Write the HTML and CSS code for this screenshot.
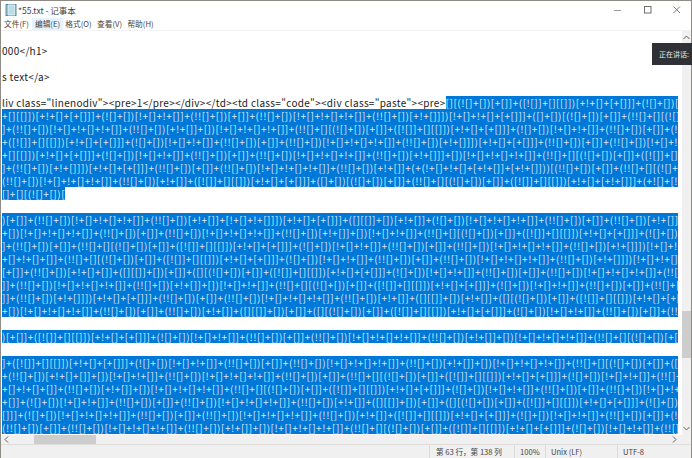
FILE: index.html
```html
<!DOCTYPE html>
<html lang="zh-CN">
<head>
<meta charset="utf-8">
<title>*55.txt - 记事本</title>
<link rel="stylesheet" href="styles.css">
</head>
<body>
<div class="window">
  <header class="titlebar">
    <svg class="app-icon" width="12" height="12" viewBox="0 0 12 12"><rect x="1" y="0.5" width="10" height="11" fill="#8fc7dc" stroke="#5f8d9e"/><rect x="3" y="0.5" width="7" height="11" fill="#cfe9f2"/><path d="M4 3h5M4 5h5M4 7h5M4 9h5" stroke="#9cc4d2" stroke-width="0.7"/></svg>
    <span class="title">*55.txt - 记事本</span>
    <div class="controls">
      <svg width="10" height="10" viewBox="0 0 10 10"><path d="M0 5.5h7" stroke="#9a9a9a" stroke-width="1"/></svg>
      <svg width="10" height="10" viewBox="0 0 10 10"><rect x="1.5" y="1.5" width="6.500" height="6.500" fill="none" stroke="#6f6f6f"/></svg>
      <svg width="10" height="10" viewBox="0 0 10 10"><path d="M1.500 1.500l6.500 6.500M8 1.500l-6.500 6.500" stroke="#6f6f6f" stroke-width="0.900"/></svg>
    </div>
  </header>
  <nav class="menu">
    <span class="item">文件(F)</span>
    <span class="item hover">编辑(E)</span>
    <span class="item">格式(O)</span>
    <span class="item">查看(V)</span>
    <span class="item">帮助(H)</span>
  </nav>
  <div class="body">
    <main class="editor">
      <div class="line"></div>
      <div class="line">000&lt;/h1&gt;</div>
      <div class="line"></div>
      <div class="line">s text&lt;/a&gt;</div>
      <div class="line"></div>
      <div class="line">liv class="linenodiv"&gt;&lt;pre&gt;1&lt;/pre&gt;&lt;/div&gt;&lt;/td&gt;&lt;td class="code"&gt;&lt;div class="paste"&gt;&lt;pre&gt;<span class="sel-end">[][(![]+[])[+[]]+([![]]+[][[]])[+!+[]+[+[]]]+(![]+[])[!+[]+!+[]]+(!![]+[])[+[]]+(!![]+[])[!+[]</span></div>
      <div class="line sel">+[][[]])[+!+[]+[+[]]]+(![]+[])[!+[]+!+[]]+(!![]+[])[+[]]+(!![]+[])[!+[]+!+[]+!+[]]+(!![]+[])[+!+[]]])[!+[]+!+[]+[+[]]]+([]+[])[(![]+[])[+[]]+(!![]+[][(![]+[])[+[]]+([![]]</div>
      <div class="line sel">]+(!![]+[])[!+[]+!+[]+!+[]]+(!![]+[])[+!+[]]+[])[!+[]+!+[]+!+[]]+(!![]+[][(![]+[])[+[]]+([![]]+[][[]])[+!+[]+[+[]]]+(![]+[])[!+[]+!+[]]+(!![]+[])[+[]]+(!![]+[])[!+[]+!+[]]</div>
      <div class="line sel">+([![]]+[][[]])[+!+[]+[+[]]]+(![]+[])[!+[]+!+[]]+(!![]+[])[+[]]+(!![]+[])[!+[]+!+[]+!+[]]+(!![]+[])[+!+[]]])[+!+[]+[+[]]]+(!![]+[])[+[]]+(!![]+[])[!+[]+!+[]+!+[]]+(!![]+[])</div>
      <div class="line sel">+[][[]])[+!+[]+[+[]]]+(![]+[])[!+[]+!+[]]+(!![]+[])[+[]]+(!![]+[])[!+[]+!+[]+!+[]]+(!![]+[])[+!+[]]]+[])[!+[]+!+[]+!+[]]+(!![]+[][(![]+[])[+[]]+([![]]+[][[]])[+!+[]+[+[]]]</div>
      <div class="line sel">]+(!![]+[])[+!+[]]])[+!+[]+[+[]]]+(!![]+[])[+[]]+(!![]+[])[!+[]+!+[]+!+[]]+(!![]+[])[+!+[]]+(+(!+[]+!+[]+[+!+[]]+[+!+[]]))[(!![]+[])[+[]]+(!![]+[][(![]+[])[+[]]+([![]]+[][[</div>
      <div class="line sel">(!![]+[])[!+[]+!+[]+!+[]]+(!![]+[])[+!+[]]+([![]]+[][[]])[+!+[]+[+[]]]+([]+[])[(![]+[])[+[]]+(!![]+[][(![]+[])[+[]]+([![]]+[][[]])[+!+[]+[+!+[]]]+(+![]+[![]]+([]+[])[([][(![]+[])</div>
      <div class="line"><span class="sel-end">[]+[][(![]+[])[</span></div>
      <div class="line"></div>
      <div class="line sel">)[+[]]+(!![]+[])[!+[]+!+[]+!+[]]+(!![]+[])[+!+[]]+[!+[]+!+[]]])[+!+[]+[+[]]]+([][[]]+[])[+!+[]]+(![]+[])[!+[]+!+[]+!+[]]+(!![]+[])[+[]]+(!![]+[])[+!+[]]+([][[]]+[])[+[]]</div>
      <div class="line sel">+[])[!+[]+!+[]+!+[]]+(!![]+[])[+[]]+(!![]+[])[!+[]+!+[]+!+[]]+(!![]+[])[+!+[]]+[])[!+[]+!+[]]+(!![]+[][(![]+[])[+[]]+([![]]+[][[]])[+!+[]+[+[]]]+(![]+[])[!+[]+!+[]]+(!![]+[])[+[]]</div>
      <div class="line sel">]+(!![]+[])[+[]]+(!![]+[][(![]+[])[+[]]+([![]]+[][[]])[+!+[]+[+[]]]+(![]+[])[!+[]+!+[]]+(!![]+[])[+[]]+(!![]+[])[!+[]+!+[]+!+[]]+(!![]+[])[+!+[]]])[!+[]+!+[]+[+[]]]+([][[]]+[])</div>
      <div class="line sel">+[]+!+[]+[]]+(!![]+[][(![]+[])[+[]]+([![]]+[][[]])[+!+[]+[+[]]]+(![]+[])[!+[]+!+[]]+(!![]+[])[+[]]+(!![]+[])[!+[]+!+[]+!+[]]+(!![]+[])[+!+[]]])[!+[]+!+[]+[+[]]]+([][[]]+[])[+!+[]]</div>
      <div class="line sel">[+[]]+(!![]+[])[+!+[]+[]]+([][[]]+[])[+[]]+([][(![]+[])[+[]]+([![]]+[][[]])[+!+[]+[+[]]]+(![]+[])[!+[]+!+[]]+(!![]+[])[+[]]+(!![]+[])[!+[]+!+[]+!+[]]+(!![]+[])[+!+[]]]+[])[+!+[]]</div>
      <div class="line sel">]]+(!![]+[])[!+[]+!+[]+!+[]]+(!![]+[])[+!+[]]+[])[!+[]+!+[]]+(!![]+[][(![]+[])[+[]]+([![]]+[][[]])[+!+[]+[+[]]]+(![]+[])[!+[]+!+[]]+(!![]+[])[+[]]+(!![]+[])[!+[]+!+[]+!+[]]+(!![]+[])</div>
      <div class="line sel">]]+(!![]+[])[+!+[]]])[+!+[]+[+[]]]+(!![]+[])[+[]]+(!![]+[])[!+[]+!+[]+!+[]]+(!![]+[])[+!+[]]+([][[]]+[])[+!+[]]+([][(![]+[])[+[]]+([![]]+[][[]])[+!+[]+[+[]]]+(![]+[])[!+[]+!+[]]</div>
      <div class="line sel">+[])[!+[]+!+[]+!+[]]+(!![]+[])[+[]]+(!![]+[])[+!+[]]+([][[]]+[])[+[]]+([][(![]+[])[+[]]+([![]]+[][[]])[+!+[]+[+[]]]+(![]+[])[!+[]+!+[]]+(!![]+[])[+[]]+(!![]+[])[!+[]+!+[]+!+[]]</div>
      <div class="line"></div>
      <div class="line sel">)[+[]]+([![]]+[][[]])[+!+[]+[+[]]]+(![]+[])[!+[]+!+[]]+(!![]+[])[+[]]+(!![]+[])[!+[]+!+[]+!+[]]+(!![]+[])[+!+[]]+[])[!+[]+!+[]+!+[]]+(!![]+[][(![]+[])[+[]]+([![]]+[][[]])[+!+[]</div>
      <div class="line"></div>
      <div class="line sel">]+([![]]+[][[]])[+!+[]+[+[]]]+(![]+[])[!+[]+!+[]]+(!![]+[])[+[]]+(!![]+[])[!+[]+!+[]+!+[]]+(!![]+[])[+!+[]]+[])[!+[]+!+[]+!+[]]+(!![]+[][(![]+[])[+[]]+([![]]+[][[]])[+!+[]+[+[]]]</div>
      <div class="line sel">+(!![]+[])[+!+[]+[]]+[])[!+[]+!+[]]+(!![]+[])[!+[]+!+[]+!+[]]+(!![]+[])[+[]]+(!![]+[][(![]+[])[+[]]+([![]]+[][[]])[+!+[]+[+[]]]+(![]+[])[!+[]+!+[]]+(!![]+[])[+[]]+(!![]+[])[!+[]+!+[]</div>
      <div class="line sel">+[]+!+[]+[]]+(!![]+[])[+!+[]]+[])[!+[]+!+[]+!+[]]+(!![]+[][(![]+[])[+[]]+([![]]+[][[]])[+!+[]+[+[]]]+(![]+[])[!+[]+!+[]]+(!![]+[])[+[]]+(!![]+[])[!+[]+!+[]+!+[]]+(!![]+[])[+!+[]]</div>
      <div class="line sel">+[]]+(![]+[])[!+[]+!+[]]+(!![]+[])[+[]]+(!![]+[])[!+[]+!+[]+!+[]]+(!![]+[])[+!+[]]+([][[]]+[])[+[]]+([][(![]+[])[+[]]+([![]]+[][[]])[+!+[]+[+[]]]+(![]+[])[!+[]+!+[]]+(!![]+[])[+[]]</div>
      <div class="line sel">[]]]+(![]+[])[!+[]+!+[]+!+[]]+(!![]+[])[+[]]+(!![]+[])[!+[]+!+[]+!+[]]+(!![]+[])[+!+[]]+([![]]+[][[]])[+!+[]+[+[]]]+(![]+[])[!+[]+!+[]]+(!![]+[])[+[]]+(!![]+[][(![]+[])[+[]]+([![]]</div>
      <div class="line sel">(!![]+[])[+[]]+(!![]+[])[!+[]+!+[]+!+[]]+(!![]+[])[+!+[]]+[])[!+[]+!+[]+!+[]]+(!![]+[][(![]+[])[+[]]+([![]]+[][[]])[+!+[]+[+[]]]+(![]+[])[!+[]+!+[]]+(!![]+[])[+[]]+(!![]+[])[!+[]</div>
    </main>
    <aside class="vscroll">
      <svg class="arrow" width="9" height="9" viewBox="0 0 9 9"><path d="M1.500 6l3-3 3 3" fill="none" stroke="#606060"/></svg>
      <div class="vtrack"><div class="vthumb"></div></div>
      <svg class="arrow" width="9" height="9" viewBox="0 0 9 9"><path d="M1.500 3l3 3 3-3" fill="none" stroke="#606060"/></svg>
    </aside>
    <div class="speaking">正在讲话:</div>
  </div>
  <div class="hscroll">
    <svg width="9" height="9" viewBox="0 0 9 9"><path d="M6 1.500l-3 3 3 3" fill="none" stroke="#606060"/></svg>
    <div class="hthumb"></div>
    <svg class="hright" width="9" height="9" viewBox="0 0 9 9"><path d="M3 1.500l3 3-3 3" fill="none" stroke="#606060"/></svg>
  </div>
  <footer class="status">
    <span class="cell pos">第 63 行，第 138 列</span>
    <span class="cell zoom">100%</span>
    <span class="cell eol">Unix (LF)</span>
    <span class="cell enc">UTF-8</span>
  </footer>
</div>
</body>
</html>
```

FILE: styles.css
```css
* { box-sizing: border-box; }
html, body { margin: 0; height: 100%; overflow: hidden; background: #8f8b87; }
body { font-family: "Noto Sans CJK SC", "Noto Sans", sans-serif; }

.window {
  width: 690px;
  height: 457px;
  margin-left: 1px;
  margin-top: 1px;
  background: #fff;
  display: flex;
  flex-direction: column;
  color: #333;
}

.titlebar {
  height: 17px;
  flex: none;
  display: flex;
  align-items: center;
  padding-left: 4px;
  font-size: 8.500px;
}
.app-icon { flex: none; }
.title { margin-left: 1px; color: #444; }
.controls {
  margin-left: auto;
  display: flex;
  gap: 19px;
  padding-right: 9px;
}

.menu {
  height: 13px;
  flex: none;
  display: flex;
  align-items: flex-start;
  font-size: 7.700px;
  color: #444;
  border-bottom: 1px solid #f2f2f2;
}
.item { line-height: 12px; width: 31px; white-space: nowrap; text-align: center; }
.item.hover { background: #e5f3ff; }

.body { flex: 1; min-height: 0; display: flex; position: relative; }

.editor {
  flex: 1;
  min-width: 0;
  padding: 0 4px 0 1px;
  overflow: hidden;
  font-size: 10px;
  line-height: 13px;
  color: #222;
  letter-spacing: 0.300px;
}
.line { height: 13px; white-space: pre; overflow: hidden; }
.line.sel { background: #0078d7; color: #dbeaf8; letter-spacing: 0.550px; }
.sel-end { background: #0078d7; color: #dbeaf8; letter-spacing: 0.550px; }

.vscroll {
  width: 9px;
  flex: none;
  background: #f0f0f0;
  display: flex;
  flex-direction: column;
  align-items: center;
}
.arrow { flex: none; margin: 2px 0; }
.vtrack { flex: 1; width: 100%; padding-top: 267px; }
.vthumb { height: 47px; background: #cdcdcd; }

.speaking {
  position: absolute;
  top: 12px;
  right: -1px;
  width: 40px;
  height: 22px;
  background: #2f3136;
  color: #e8e8e8;
  font-size: 7px;
  line-height: 22px;
  padding-left: 7px;
  white-space: nowrap;
  overflow: hidden;
}

.hscroll {
  height: 9px;
  flex: none;
  background: #f0f0f0;
  display: flex;
  align-items: center;
  padding-left: 1px;
}
.hthumb { width: 62px; height: 9px; background: #cdcdcd; margin-left: 23px; }
.hright { margin-left: auto; margin-right: 12px; }

.status {
  height: 14px;
  flex: none;
  background: #f0f0f0;
  border-top: 1px solid #dcdcdc;
  display: flex;
  font-size: 7.600px;
  line-height: 13px;
  color: #444;
  white-space: nowrap;
}
.cell { border-left: 1px solid #dcdcdc; padding-left: 5px; }
.pos { margin-left: 428px; width: 85px; padding-left: 6px; }
.zoom { width: 31px; }
.eol { width: 72px; }
.enc { flex: 1; }
```
